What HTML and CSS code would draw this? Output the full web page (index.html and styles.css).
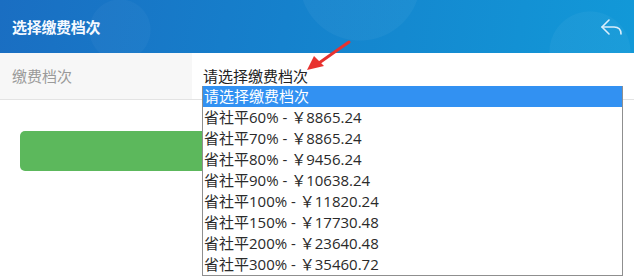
FILE: index.html
```html
<!DOCTYPE html>
<html lang="zh-CN">
<head>
    <meta charset="UTF-8">
    <meta name="viewport" content="width=device-width, initial-scale=1.0">
    <title>选择缴费档次</title>
    <link rel="stylesheet" href="styles.css">
</head>
<body>
    <div class="page">
        <div class="topbar">
            <div class="title">选择缴费档次</div>
            <svg class="back" width="24" height="22" viewBox="0 0 24 22">
                <path d="M9 3 L2 10 L9 17" fill="none" stroke="#d9eefc" stroke-width="1.6" stroke-linecap="round" stroke-linejoin="round"/>
                <path d="M2 10 L14 10 Q21 10 21 17" fill="none" stroke="#d9eefc" stroke-width="1.6" stroke-linecap="round"/>
            </svg>
        </div>

        <div class="form-row">
            <div class="label">缴费档次</div>
            <div class="value">请选择缴费档次</div>
        </div>

        <div class="actions">
            <div class="submit"></div>
        </div>

        <!-- open select list -->
        <div class="options">
            <div class="option selected">请选择缴费档次</div>
            <div class="option">省社平60% - ￥8865.24</div>
            <div class="option">省社平70% - ￥8865.24</div>
            <div class="option">省社平80% - ￥9456.24</div>
            <div class="option">省社平90% - ￥10638.24</div>
            <div class="option">省社平100% - ￥11820.24</div>
            <div class="option">省社平150% - ￥17730.48</div>
            <div class="option">省社平200% - ￥23640.48</div>
            <div class="option">省社平300% - ￥35460.72</div>
        </div>

        <!-- red annotation arrow -->
        <svg class="pointer" width="50" height="36" viewBox="0 0 50 36">
            <path d="M45 3 Q32 12 15 24" fill="none" stroke="#e8322f" stroke-width="3" stroke-linecap="round"/>
            <polygon points="3,31 10,17 20,27" fill="#e8322f"/>
        </svg>
    </div>
</body>
</html>
```

FILE: styles.css
```css
body {
    margin: 0;
    font-family: "Open Sans", "Noto Sans CJK SC", sans-serif;
    background-color: #fff;
}
.page {
    position: relative;
    width: 634px;
    height: 279px;
    overflow: hidden;
}
.topbar {
    height: 53px;
    display: flex;
    align-items: center;
    justify-content: space-between;
    padding: 0 12px;
    box-sizing: border-box;
    background:
        radial-gradient(circle at 360px -20px, rgba(255, 255, 255, 0.04) 0 60px, transparent 61px),
        radial-gradient(circle at 590px 52px, rgba(255, 255, 255, 0.04) 0 40px, transparent 41px),
        radial-gradient(circle at 120px 30px, rgba(255, 255, 255, 0.03) 0 30px, transparent 31px),
        linear-gradient(100deg, #1a6ec2 0%, #1581cc 45%, #1299d8 100%);
}
.title {
    color: #f4f9ff;
    font-size: 15px;
    font-weight: bold;
    letter-spacing: -0.3px;
}
.back {
    margin-right: -2px;
    margin-top: 2px;
}
.form-row {
    display: flex;
    height: 46px;
    border-bottom: 1px solid #e3e3e3;
}
.label {
    width: 180px;
    padding-left: 12px;
    background-color: #f7f7f7;
    color: #9a9a9a;
    font-size: 15px;
    line-height: 46px;
}
.value {
    padding-left: 11px;
    color: #222;
    font-size: 15px;
    line-height: 46px;
}
.actions {
    padding: 31px 20px 0;
}
.submit {
    height: 40px;
    background-color: #5cb85c;
    border-radius: 5px;
}
.options {
    position: absolute;
    left: 202px;
    top: 86px;
    width: 419px;
    border: 1px solid #8f8f8f;
    border-top: none;
    background-color: #fff;
}
.option {
    height: 21px;
    line-height: 21px;
    padding-left: 1px;
    font-size: 15px;
    color: #2a2a2a;
    white-space: nowrap;
}
.option.selected {
    background-color: #3291f2;
    color: #fff;
}
.pointer {
    position: absolute;
    left: 304px;
    top: 39px;
}
```
